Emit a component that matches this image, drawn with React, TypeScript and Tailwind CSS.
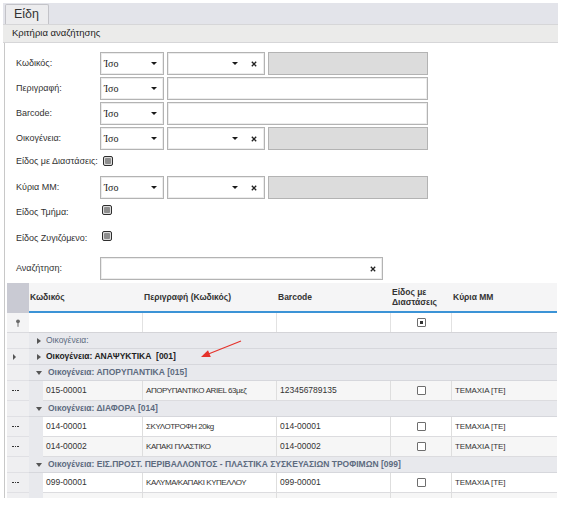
import React from 'react';

type Row =
  | { kind: 'group'; text: string; open: boolean; tone: 'muted' | 'bold' | 'normal'; mark?: boolean }
  | { kind: 'data'; code: string; desc: string; barcode: string; mm: string; alt?: boolean };

const rows: Row[] = [
  { kind: 'group', text: 'Οικογένεια:', open: false, tone: 'muted' },
  { kind: 'group', text: 'Οικογένεια: ΑΝΑΨΥΚΤΙΚΑ\u00a0 [001]', open: false, tone: 'bold', mark: true },
  { kind: 'group', text: 'Οικογένεια: ΑΠΟΡΥΠΑΝΤΙΚΑ [015]', open: true, tone: 'normal' },
  { kind: 'data', code: '015-00001', desc: 'ΑΠΟΡΥΠΑΝΤΙΚΟ ARIEL 63μεζ', barcode: '123456789135', mm: 'ΤΕΜΑΧΙΑ [ΤΕ]', alt: true },
  { kind: 'group', text: 'Οικογένεια: ΔΙΑΦΟΡΑ [014]', open: true, tone: 'normal' },
  { kind: 'data', code: '014-00001', desc: 'ΣΚΥΛΟΤΡΟΦΗ 20kg', barcode: '014-00001', mm: 'ΤΕΜΑΧΙΑ [ΤΕ]' },
  { kind: 'data', code: '014-00002', desc: 'ΚΑΠΑΚΙ ΠΛΑΣΤΙΚΟ', barcode: '014-00002', mm: 'ΤΕΜΑΧΙΑ [ΤΕ]', alt: true },
  { kind: 'group', text: 'Οικογένεια: ΕΙΣ.ΠΡΟΣΤ. ΠΕΡΙΒΑΛΛΟΝΤΟΣ - ΠΛΑΣΤΙΚΑ ΣΥΣΚΕΥΑΣΙΩΝ ΤΡΟΦΙΜΩΝ [099]', open: true, tone: 'normal' },
  { kind: 'data', code: '099-00001', desc: 'ΚΑΛΥΜΑ/ΚΑΠΑΚΙ ΚΥΠΕΛΛΟΥ', barcode: '099-00001', mm: 'ΤΕΜΑΧΙΑ [ΤΕ]' },
  { kind: 'data', code: '', desc: '', barcode: '', mm: '', alt: true },
];

const Caret = () => (
  <span className="inline-block w-0 h-0 border-l-[3px] border-r-[3px] border-t-[3px] border-l-transparent border-r-transparent border-t-[#1a1a1a]" />
);

const ClearX = () => (
  <svg width="6" height="6" viewBox="0 0 6 6" className="shrink-0">
    <path d="M0.8 0.8 L5.2 5.2 M5.2 0.8 L0.8 5.2" stroke="#222" strokeWidth="1.3" />
  </svg>
);

const boxCls = 'h-[23px] border border-[#b3b3b3] shadow-[inset_0_0_0_1px_#ececec] flex items-center';

function OpSelect() {
  return (
    <div className={`${boxCls} w-[64px] bg-white justify-between pl-[3px] pr-[6px]`}>
      <span className="text-[10px] font-['Liberation_Serif',serif] text-[#222]">Ίσο</span>
      <Caret />
    </div>
  );
}

function Lookup() {
  return (
    <div className={`${boxCls} w-[98px] bg-white justify-end gap-[13px] pr-[7px]`}>
      <Caret />
      <ClearX />
    </div>
  );
}

function FormCheck() {
  return (
    <div className="w-[10px] h-[10px] border border-[#2e2e2e] rounded-[2px] bg-[#dcdcdc] p-[1px]">
      <div className="w-full h-full bg-[#8e8e8e] rounded-[1px]" />
    </div>
  );
}

function GridCheck({ dot }: { dot?: boolean }) {
  return (
    <div className="w-[9px] h-[9px] border border-[#6e6e6e] rounded-[1px] bg-white flex items-center justify-center">
      {dot && <div className="w-[3px] h-[3px] bg-[#333]" />}
    </div>
  );
}

function Label({ children }: { children: React.ReactNode }) {
  return <div className="w-[84px] shrink-0 text-[9px] text-[#333] whitespace-nowrap">{children}</div>;
}

export default function App() {
  return (
    <div className="relative w-[565px] h-[507px] bg-white overflow-hidden text-[#333] font-['Liberation_Sans',Arial,sans-serif]">
      <div className="ml-[3px] pt-[3px] w-[555px]">
        {/* tab strip */}
        <div className="h-[21px] bg-[#e3e4ea] flex items-end pl-[2px]">
          <div className="h-[20px] w-[44px] bg-[#ececee] border border-b-0 border-[#c3c3c8] rounded-t-[2px] flex items-center pl-[8px] text-[12.5px] text-[#333]">
            Είδη
          </div>
        </div>
        <div className="h-[19px] bg-[#ebebea] border-t border-b border-[#d6d6d8] flex items-center pl-[9px] text-[9.5px] text-[#222]">
          Κριτήρια αναζήτησης
        </div>

        <div className="ml-[1px] border-l border-[#c8c8c8] h-[455px] overflow-hidden">
          {/* search criteria */}
          <div className="pt-[9px] pl-[11px] flex flex-col">
            <div className="flex items-center h-[23px] mb-[2px]">
              <Label>Κωδικός:</Label>
              <div className="flex gap-[3px]">
                <OpSelect />
                <Lookup />
                <div className={`${boxCls} w-[160px] bg-[#dcdcdc] shadow-none`} />
              </div>
            </div>
            <div className="flex items-center h-[23px] mb-[2px]">
              <Label>Περιγραφή:</Label>
              <div className="flex gap-[3px]">
                <OpSelect />
                <div className={`${boxCls} w-[261px] bg-white`} />
              </div>
            </div>
            <div className="flex items-center h-[23px] mb-[2px]">
              <Label>Barcode:</Label>
              <div className="flex gap-[3px]">
                <OpSelect />
                <div className={`${boxCls} w-[261px] bg-white`} />
              </div>
            </div>
            <div className="flex items-center h-[23px] mb-[1px]">
              <Label>Οικογένεια:</Label>
              <div className="flex gap-[3px]">
                <OpSelect />
                <Lookup />
                <div className={`${boxCls} w-[160px] bg-[#dcdcdc] shadow-none`} />
              </div>
            </div>
            <div className="flex items-center h-[22px] mb-[3px]">
              <Label>Είδος με Διαστάσεις:</Label>
              <div className="ml-[3px] -mt-[2px]">
                <FormCheck />
              </div>
            </div>
            <div className="flex items-center h-[23px] mb-[1px]">
              <Label>Κύρια ΜΜ:</Label>
              <div className="flex gap-[3px]">
                <OpSelect />
                <Lookup />
                <div className={`${boxCls} w-[160px] bg-[#dcdcdc] shadow-none`} />
              </div>
            </div>
            <div className="flex items-center h-[26px]">
              <Label>Είδος Τμήμα:</Label>
              <div className="ml-[2px] -mt-[6px]">
                <FormCheck />
              </div>
            </div>
            <div className="flex items-center h-[26px]">
              <Label>Είδος Ζυγιζόμενο:</Label>
              <div className="ml-[2px] -mt-[6px]">
                <FormCheck />
              </div>
            </div>
            <div className="flex items-center h-[23px] mt-[5px]">
              <Label>Αναζήτηση:</Label>
              <div className={`${boxCls} w-[283px] bg-white justify-end pr-[6px]`}>
                <ClearX />
              </div>
            </div>
          </div>

          {/* grid */}
          <div className="ml-[2px] mt-[3px] w-[550px]">
            {/* header */}
            <div className="flex">
              <div className="w-[22px] h-[30px] bg-[#c9cad3]" />
              <div className="flex h-[30px] bg-[#f5f5f6] border-b-2 border-[#3b93d6] text-[8.5px] font-bold text-[#333]">
                <div className="w-[114px] pl-[1px] flex items-center">Κωδικός</div>
                <div className="w-[134px] pl-[1px] flex items-center">Περιγραφή (Κωδικός)</div>
                <div className="w-[114px] pl-[1px] flex items-center">Barcode</div>
                <div className="w-[61px] pl-[1px] flex items-center leading-[10px]">
                  Είδος με
                  <br />
                  Διαστάσεις
                </div>
                <div className="w-[105px] pl-[1px] flex items-center">Κύρια ΜΜ</div>
              </div>
            </div>
            {/* filter row */}
            <div className="flex h-[20px]">
              <div className="w-[22px] bg-[#f4f4f5] border-b border-[#dadade] flex items-center justify-center">
                <svg width="6" height="8" viewBox="0 0 6 8">
                  <circle cx="3" cy="2.3" r="1.9" fill="#6a6a6a" />
                  <path d="M3 4 V7.8" stroke="#6a6a6a" strokeWidth="1" />
                </svg>
              </div>
              <div className="flex bg-white border-b border-[#d4d4d8]">
                <div className="w-[114px] border-r border-[#e2e2e2]" />
                <div className="w-[134px] border-r border-[#e2e2e2]" />
                <div className="w-[114px] border-r border-[#e2e2e2]" />
                <div className="w-[61px] border-r border-[#e2e2e2] flex items-center justify-center">
                  <GridCheck dot />
                </div>
                <div className="w-[105px]" />
              </div>
            </div>
            {/* body rows */}
            {rows.map((r, i) =>
              r.kind === 'group' ? (
                <div key={i} className="flex h-[16px]">
                  <div className="w-[22px] bg-[#efeff1] border-b border-[#e0e0e4] flex items-center pl-[6px]">
                    {r.mark && (
                      <span className="inline-block w-0 h-0 border-t-[3px] border-b-[3px] border-l-[3px] border-t-transparent border-b-transparent border-l-[#555]" />
                    )}
                  </div>
                  <div
                    className={`w-[528px] bg-[#e8e9ed] border-b border-[#d6d7dc] flex items-center pl-[7px] gap-[6px] text-[8.5px] whitespace-nowrap ${
                      r.tone === 'bold' ? 'font-bold text-[#1e1e1e]' : r.tone === 'muted' ? 'text-[#5b6a7e]' : 'font-bold text-[#5d6b7f]'
                    }`}
                  >
                    {r.open ? (
                      <span className="inline-block w-0 h-0 border-l-[3px] border-r-[3px] border-t-[4px] border-l-transparent border-r-transparent border-t-[#555]" />
                    ) : (
                      <span className="inline-block w-0 h-0 border-t-[3px] border-b-[3px] border-l-[4px] border-t-transparent border-b-transparent border-l-[#555] ml-[1px] mr-[-1px]" />
                    )}
                    <span>{r.text}</span>
                  </div>
                </div>
              ) : (
                <div key={i} className="flex h-[20px]">
                  <div className="w-[22px] bg-[#efeff1] border-b border-[#e0e0e4] flex items-center pl-[5px]">
                    {r.code && (
                      <span className="flex gap-[1px]">
                        <span className="w-[1.5px] h-[1.5px] bg-[#333]" />
                        <span className="w-[1.5px] h-[1.5px] bg-[#333]" />
                        <span className="w-[1.5px] h-[1.5px] bg-[#333]" />
                      </span>
                    )}
                  </div>
                  <div className="w-[14px] bg-[#e8e9ed]" />
                  <div className={`flex border-b border-[#dcdcdf] text-[8px] text-[#333] whitespace-nowrap ${r.alt ? 'bg-[#f6f6f6]' : 'bg-white'}`}>
                    <div className="w-[100px] border-r border-[#dedede] pl-[3px] flex items-center text-[8.5px]">{r.code}</div>
                    <div className="w-[134px] border-r border-[#dedede] pl-[3px] flex items-center tracking-[-0.45px]">{r.desc}</div>
                    <div className="w-[114px] border-r border-[#dedede] pl-[3px] flex items-center text-[8.5px]">{r.barcode}</div>
                    <div className="w-[61px] border-r border-[#dedede] flex items-center justify-center">
                      {r.code && <GridCheck />}
                    </div>
                    <div className="w-[105px] pl-[3px] flex items-center tracking-[-0.1px]">{r.mm}</div>
                  </div>
                </div>
              )
            )}
          </div>
        </div>
      </div>

      {/* annotation arrow */}
      <svg className="absolute left-0 top-0 pointer-events-none" width="565" height="507">
        <line x1="241" y1="341" x2="209" y2="353.7" stroke="#e5322b" strokeWidth="1.2" />
        <polygon points="201,357 208,350.2 210.8,357" fill="#e5322b" />
      </svg>
    </div>
  );
}
